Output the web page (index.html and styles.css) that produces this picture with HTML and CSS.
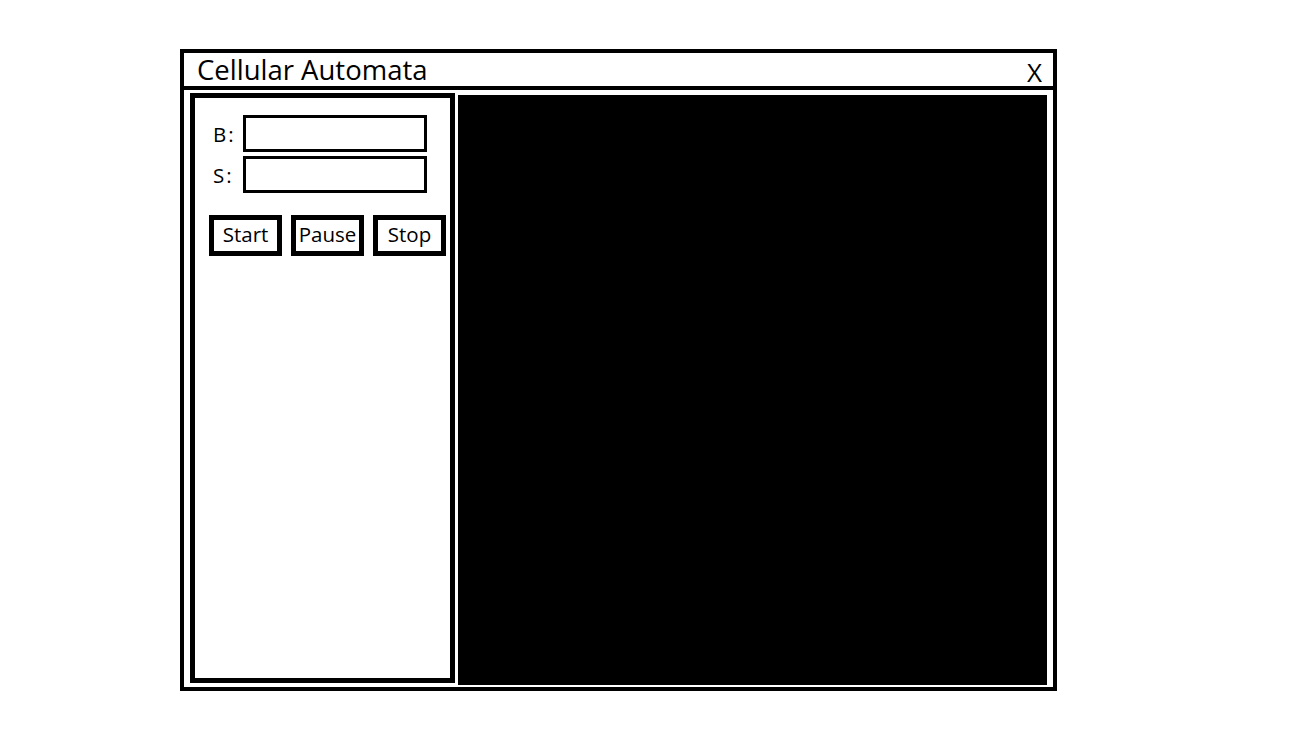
FILE: index.html
```html
<!DOCTYPE html>
<html>
<head>
<meta charset="utf-8">
<link rel="stylesheet" href="styles.css">
</head>
<body>
<div class="window">
  <div class="titlebar">
    <span class="title">Cellular Automata</span>
    <span class="close">X</span>
  </div>
  <div class="content">
    <div class="panel">
      <div class="rules">
        <div class="rule"><span class="label">B:</span><input class="field" type="text"></div>
        <div class="rule"><span class="label">S:</span><input class="field" type="text"></div>
      </div>
      <div class="buttons">
        <button class="btn">Start</button>
        <button class="btn">Pause</button>
        <button class="btn">Stop</button>
      </div>
    </div>
    <div class="canvas"></div>
  </div>
</div>
</body>
</html>
```

FILE: styles.css
```css
html, body {
  margin: 0;
  padding: 0;
  background: #fff;
}
body {
  font-family: "Open Sans", "Noto Sans", sans-serif;
  color: #000;
}
.window {
  margin: 49px 0 0 180px;
  width: 869px;
  height: 634px;
  border: 4px solid #000;
  display: flex;
  flex-direction: column;
}
.titlebar {
  height: 33px;
  border-bottom: 4px solid #000;
  display: flex;
  align-items: center;
  justify-content: space-between;
  padding: 0 11px 0 13px;
}
.title {
  font-size: 27.5px;
  line-height: 33px;
  margin-top: -1px;
}
.close {
  font-size: 26px;
  line-height: 33px;
  margin-top: 6px;
}
.content {
  flex: 1;
  display: flex;
  padding: 3px 6px 0 6px;
  gap: 3px;
}
.panel {
  width: 255px;
  height: 580px;
  border: 5px solid #000;
}
.rules {
  padding: 17px 0 0 18px;
  display: flex;
  flex-direction: column;
  gap: 4px;
}
.rule {
  display: flex;
  align-items: center;
}
.label {
  width: 30px;
  font-size: 20.5px;
  letter-spacing: 2px;
}
.field {
  width: 178px;
  height: 31px;
  border: 3px solid #000;
  margin: 0;
  padding: 0;
  outline: none;
  background: #fff;
}
.buttons {
  display: flex;
  gap: 9px;
  padding: 22px 0 0 14px;
}
.btn {
  width: 73px;
  height: 41px;
  border: 5px solid #000;
  background: #fff;
  font-family: "Open Sans", "Noto Sans", sans-serif;
  font-size: 20.5px;
  line-height: 1;
  padding: 0 0 2px 0;
  margin: 0;
  color: #000;
  white-space: nowrap;
  overflow: hidden;
}
.canvas {
  width: 589px;
  height: 590px;
  margin-top: 2px;
  background: #000;
}
```
